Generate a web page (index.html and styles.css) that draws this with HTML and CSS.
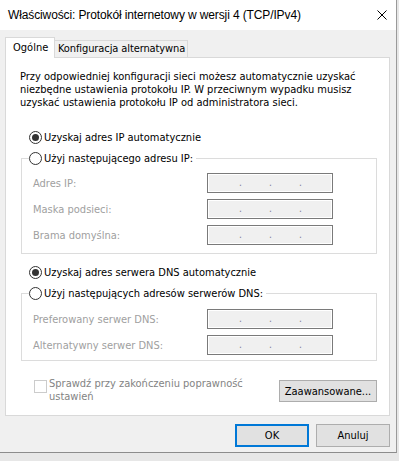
FILE: index.html
```html
<!DOCTYPE html>
<html lang="pl">
<head>
<meta charset="utf-8">
<title>Właściwości: Protokół internetowy w wersji 4 (TCP/IPv4)</title>
<link rel="stylesheet" href="styles.css">
</head>
<body>
<div class="window">
  <div class="titlebar">
    <span class="title">Właściwości: Protokół internetowy w wersji 4 (TCP/IPv4)</span>
    <svg class="close" width="10" height="10" viewBox="0 0 10 10"><path d="M0.5 0.5L9.5 9.5M9.5 0.5L0.5 9.5" stroke="#000" stroke-width="1" fill="none"/></svg>
  </div>
  <div class="content">
    <div class="tabs">
      <div class="tab active">Ogólne</div>
      <div class="tab">Konfiguracja alternatywna</div>
    </div>
    <div class="panel">
      <p class="intro">Przy odpowiedniej konfiguracji sieci możesz automatycznie uzyskać<br>niezbędne ustawienia protokołu IP. W przeciwnym wypadku musisz<br>uzyskać ustawienia protokołu IP od administratora sieci.</p>

      <div class="radio-row ip-auto"><span class="radio checked"></span><span>Uzyskaj adres IP automatycznie</span></div>
      <fieldset class="group">
        <legend class="radio-row"><span class="radio"></span><span>Użyj następującego adresu IP:</span></legend>
        <div class="fields ip-fields">
          <div class="field"><span class="label">Adres IP:</span><span class="ip"><span class="seg"></span><span class="dot">.</span><span class="seg"></span><span class="dot">.</span><span class="seg"></span><span class="dot">.</span><span class="seg"></span></span></div>
          <div class="field"><span class="label">Maska podsieci:</span><span class="ip"><span class="seg"></span><span class="dot">.</span><span class="seg"></span><span class="dot">.</span><span class="seg"></span><span class="dot">.</span><span class="seg"></span></span></div>
          <div class="field"><span class="label">Brama domyślna:</span><span class="ip"><span class="seg"></span><span class="dot">.</span><span class="seg"></span><span class="dot">.</span><span class="seg"></span><span class="dot">.</span><span class="seg"></span></span></div>
        </div>
      </fieldset>

      <div class="radio-row dns-auto"><span class="radio checked"></span><span>Uzyskaj adres serwera DNS automatycznie</span></div>
      <fieldset class="group">
        <legend class="radio-row"><span class="radio"></span><span>Użyj następujących adresów serwerów DNS:</span></legend>
        <div class="fields dns-fields">
          <div class="field"><span class="label">Preferowany serwer DNS:</span><span class="ip"><span class="seg"></span><span class="dot">.</span><span class="seg"></span><span class="dot">.</span><span class="seg"></span><span class="dot">.</span><span class="seg"></span></span></div>
          <div class="field"><span class="label">Alternatywny serwer DNS:</span><span class="ip"><span class="seg"></span><span class="dot">.</span><span class="seg"></span><span class="dot">.</span><span class="seg"></span><span class="dot">.</span><span class="seg"></span></span></div>
        </div>
      </fieldset>

      <div class="bottom-row">
        <div class="check">
          <span class="checkbox"></span>
          <span class="check-label">Sprawdź przy zakończeniu poprawność<br>ustawień</span>
        </div>
        <div class="button advanced">Zaawansowane...</div>
      </div>
    </div>
    <div class="footer">
      <div class="button ok">OK</div>
      <div class="button">Anuluj</div>
    </div>
  </div>
</div>
</body>
</html>
```
FILE: styles.css
```css
html, body {
  margin: 0;
  padding: 0;
}
body {
  background: #e7e7e7;
  font-family: "DejaVu Sans Condensed", "Liberation Sans", sans-serif;
  font-size: 11px;
  color: #000;
}
.window {
  width: 396px;
  height: 452px;
  background: #f0f0f0;
  border-right: 1px solid #9a9a9a;
  border-bottom: 1px solid #8c8c8c;
  display: flex;
  flex-direction: column;
  overflow: hidden;
}
.titlebar {
  height: 30px;
  background: #fff;
  display: flex;
  align-items: center;
  justify-content: space-between;
  padding: 0 9px 0 8px;
  flex: none;
}
.title {
  font-family: "Liberation Sans", Arial, sans-serif;
  font-size: 12px;
  letter-spacing: -0.12px;
}
.content {
  padding: 7px 6px 0 5px;
}
.tabs {
  display: flex;
  align-items: flex-end;
  margin-bottom: -1px;
  position: relative;
  z-index: 1;
}
.tab {
  box-sizing: border-box;
  height: 18px;
  line-height: 16px;
  padding: 0 2px 0 3px;
  border: 1px solid #d9d9d9;
  border-left: none;
  background: #f0f0f0;
  white-space: nowrap;
  letter-spacing: -0.1px;
}
.tab.active {
  width: 50px;
  height: 21px;
  line-height: 20px;
  padding: 0 0 0 7px;
  border-left: 1px solid #d9d9d9;
  border-bottom: none;
  background: #fff;
  letter-spacing: 0;
}
.panel {
  background: #fff;
  border: 1px solid #d9d9d9;
  padding: 12px 12px 12px 14px;
}
.intro {
  margin: 0;
  line-height: 13px;
  white-space: nowrap;
}
.radio-row {
  display: flex;
  align-items: center;
  height: 16px;
  gap: 2px;
  white-space: nowrap;
}
.radio {
  box-sizing: border-box;
  width: 13px;
  height: 13px;
  border: 1px solid #333;
  border-radius: 50%;
  display: grid;
  place-items: center;
  flex: none;
}
.radio.checked::after {
  content: "";
  width: 7px;
  height: 7px;
  border-radius: 50%;
  background: #333;
}
.ip-auto {
  margin: 20px 0 0 9px;
}
.dns-auto {
  margin: 10px 0 0 9px;
}
.group {
  margin: 5px 0 0 1px;
  padding: 0;
  border: 1px solid #dcdcdc;
  min-width: 0;
}
.group legend {
  margin-left: 7px;
  padding: 0 3px 0 0;
}
.fields {
  display: flex;
  flex-direction: column;
  gap: 6px;
  padding-left: 11px;
}
.ip-fields {
  padding-top: 7px;
  padding-bottom: 8px;
}
.dns-fields {
  padding-top: 8px;
  padding-bottom: 5px;
}
.field {
  display: flex;
  align-items: center;
  height: 20px;
}
.label {
  width: 174px;
  color: #a0a0a0;
  white-space: nowrap;
}
.ip {
  box-sizing: border-box;
  width: 126px;
  height: 20px;
  border: 1px solid #7a7a7a;
  box-shadow: inset 0 0 0 1px #fff;
  background: #f0f0f0;
  display: flex;
  padding-left: 4px;
  line-height: 17px;
}
.seg {
  width: 27px;
}
.dot {
  width: 3px;
  text-align: center;
  color: #7d7d95;
  font-size: 10px;
}
.bottom-row {
  margin-top: 16px;
  display: flex;
  justify-content: space-between;
  align-items: flex-start;
}
.check {
  display: flex;
  align-items: flex-start;
  margin-left: 14px;
}
.checkbox {
  box-sizing: border-box;
  width: 13px;
  height: 13px;
  border: 1px solid #cccccc;
  margin-top: 3px;
  flex: none;
}
.check-label {
  margin-left: 2px;
  line-height: 13px;
  color: #838383;
  white-space: nowrap;
}
.button {
  box-sizing: border-box;
  background: #e1e1e1;
  border: 1px solid #adadad;
  display: flex;
  align-items: center;
  justify-content: center;
  white-space: nowrap;
}
.advanced {
  width: 98px;
  height: 22px;
  margin-top: 3px;
}
.footer {
  margin-top: 8px;
  display: flex;
  justify-content: flex-end;
  gap: 7px;
}
.footer .button {
  width: 74px;
  height: 23px;
}
.footer .ok {
  border: 2px solid #0078d7;
}
```
